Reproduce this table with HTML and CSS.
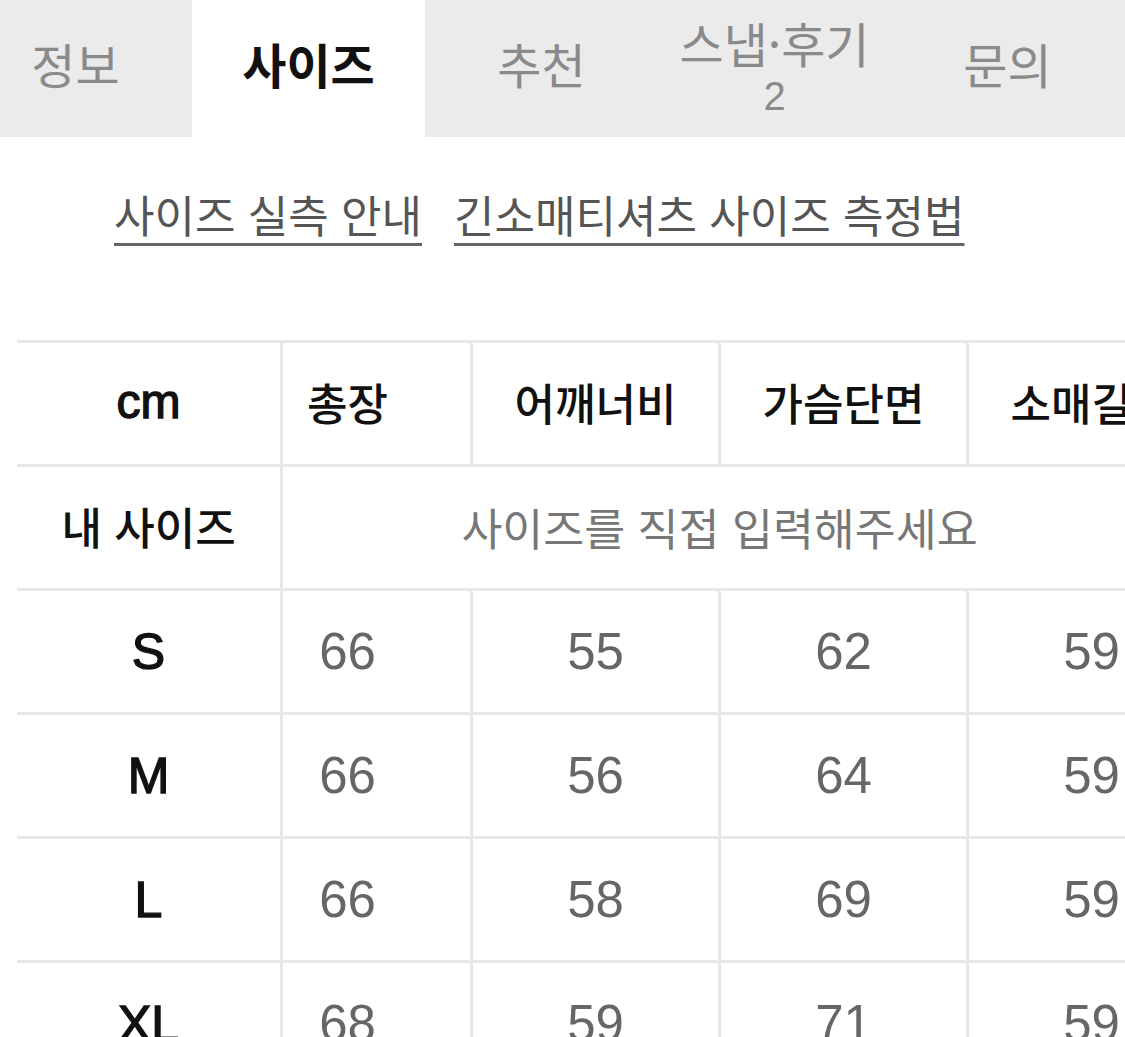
FILE: index.html
```html
<!DOCTYPE html>
<html lang="ko">
<head>
<meta charset="utf-8">
<title>사이즈</title>
<link rel="stylesheet" href="styles.css">
</head>
<body>
<div class="page">
  <nav class="tabs">
    <div class="tab">정보</div>
    <div class="tab active">사이즈</div>
    <div class="tab">추천</div>
    <div class="tab two"><span>스냅·후기</span><span class="count">2</span></div>
    <div class="tab">문의</div>
  </nav>

  <div class="links">
    <a class="link">사이즈 실측 안내</a>
    <a class="link">긴소매티셔츠 사이즈 측정법</a>
  </div>

  <div class="table">
    <div class="fixed">
      <div class="cell head latin">cm</div>
      <div class="cell head">내 사이즈</div>
      <div class="cell size">S</div>
      <div class="cell size">M</div>
      <div class="cell size">L</div>
      <div class="cell size">XL</div>
    </div>
    <div class="scroll">
      <div class="grid">
        <div class="cell head">총장</div>
        <div class="cell head">어깨너비</div>
        <div class="cell head">가슴단면</div>
        <div class="cell head">소매길이</div>

        <div class="cell input">사이즈를 직접 입력해주세요</div>

        <div class="cell num">66</div>
        <div class="cell num">55</div>
        <div class="cell num">62</div>
        <div class="cell num">59</div>

        <div class="cell num">66</div>
        <div class="cell num">56</div>
        <div class="cell num">64</div>
        <div class="cell num">59</div>

        <div class="cell num">66</div>
        <div class="cell num">58</div>
        <div class="cell num">69</div>
        <div class="cell num">59</div>

        <div class="cell num">68</div>
        <div class="cell num">59</div>
        <div class="cell num">71</div>
        <div class="cell num">59</div>
      </div>
    </div>
  </div>
</div>
</body>
</html>
```

FILE: styles.css
```css
* { box-sizing: border-box; }

html, body {
  margin: 0;
  padding: 0;
  background: #ffffff;
}

body {
  font-family: "Liberation Sans", "Noto Sans CJK KR", sans-serif;
  color: #111111;
}

.page {
  width: 1125px;
  height: 1037px;
  overflow: hidden;
}

/* Tabs */
.tabs {
  display: flex;
  height: 137px;
  background: #ebebeb;
  margin-left: -41px;
}

.tab {
  flex: 0 0 233px;
  display: flex;
  flex-direction: column;
  align-items: center;
  justify-content: center;
  font-family: "Noto Sans CJK KR", sans-serif;
  font-size: 48px;
  line-height: 1;
  color: #8a8a8a;
  padding-bottom: 12px;
}

.tab.active {
  background: #ffffff;
  color: #111111;
  font-weight: 700;
}

.tab.two {
  gap: 10px;
  padding-bottom: 4px;
  padding-top: 0;
}

.tab .count {
  font-family: "Liberation Sans", sans-serif;
  font-size: 40px;
  line-height: 1;
}

/* Links */
.links {
  display: flex;
  gap: 32px;
  padding: 52px 0 0 114px;
  height: 203px;
}

.link {
  font-family: "Noto Sans CJK KR", sans-serif;
  font-size: 44px;
  line-height: 50px;
  color: #555555;
  text-decoration: underline;
  text-decoration-thickness: 3px;
  text-underline-offset: 10px;
  text-decoration-color: #666666;
}

/* Table */
.table {
  display: flex;
  margin-left: 17px;
  border-top: 3px solid #e8e8e8;
}

.fixed {
  flex: 0 0 266px;
  border-right: 3px solid #e8e8e8;
}

.scroll {
  flex: 1 1 auto;
  overflow: hidden;
}

.grid {
  display: grid;
  grid-template-columns: repeat(4, 248px);
  margin-left: -58px;
  width: 992px;
}

.cell {
  height: 124px;
  display: flex;
  align-items: center;
  justify-content: center;
  border-bottom: 3px solid #e8e8e8;
  font-size: 44px;
  font-family: "Noto Sans CJK KR", sans-serif;
  line-height: 1;
}

.grid .cell {
  border-right: 3px solid #e8e8e8;
}

.head {
  font-weight: 500;
  color: #111111;
  padding-bottom: 4px;
}

.head.latin {
  font-family: "Liberation Sans", sans-serif;
  font-size: 48px;
  font-weight: 400;
  -webkit-text-stroke: 1.4px #111111;
  padding-bottom: 4px;
}

.size {
  font-family: "Liberation Sans", sans-serif;
  font-size: 50px;
  font-weight: 400;
  -webkit-text-stroke: 1.4px #111111;
  color: #111111;
}

.num {
  font-family: "Liberation Sans", sans-serif;
  font-size: 51px;
  color: #666666;
}

.input {
  grid-column: 1 / span 4;
  color: #777777;
  border-right: none;
  font-size: 44.5px;
}
```
